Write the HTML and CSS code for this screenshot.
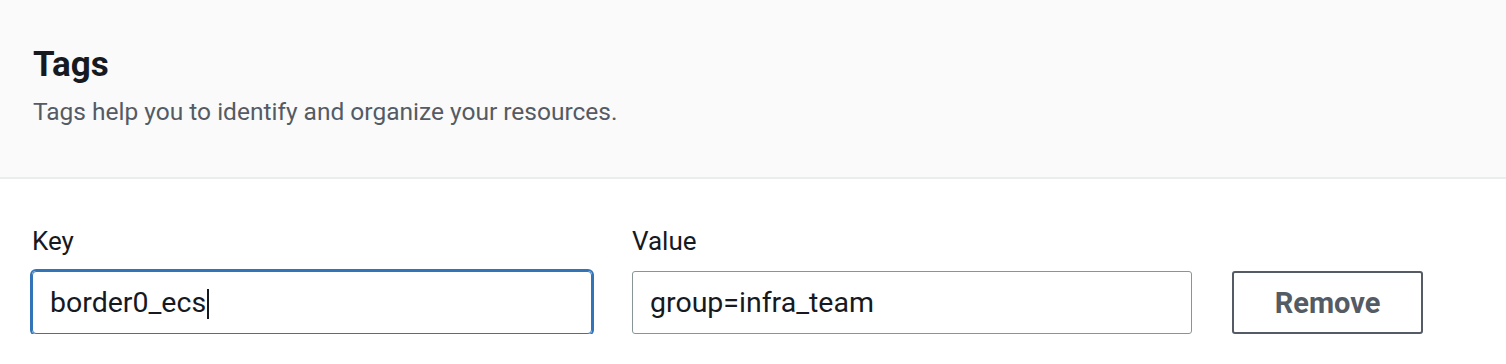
FILE: index.html
```html
<!DOCTYPE html>
<html lang="en">
<head>
    <meta charset="UTF-8">
    <meta name="viewport" content="width=device-width, initial-scale=1.0">
    <title>Tags</title>
    <link rel="stylesheet" href="styles.css">
</head>
<body>
    <div class="panel">
        <div class="panel-header">
            <h2>Tags</h2>
            <p class="description">Tags help you to identify and organize your resources.</p>
        </div>

        <div class="panel-body">
            <div class="tag-row">
                <div class="field">
                    <label>Key</label>
                    <div class="input focused">border0_ecs<span class="caret"></span></div>
                </div>
                <div class="field">
                    <label>Value</label>
                    <div class="input">group=infra_team</div>
                </div>
                <button type="button" class="remove">Remove</button>
            </div>
        </div>
    </div>
</body>
</html>
```

FILE: styles.css
```css
body {
    margin: 0;
    font-family: Roboto, "Noto Sans", Arial, sans-serif;
    background-color: #fff;
    color: #16191f;
}

.panel-header {
    background-color: #fafafa;
    border-bottom: 2px solid #eaeded;
    padding: 44px 33px 0;
    height: 133px;
}

h2 {
    margin: 0;
    font-size: 35px;
    font-weight: 700;
    line-height: 42px;
    color: #16191f;
}

.description {
    margin: 8px 0 0;
    font-size: 24.5px;
    line-height: 36px;
    color: #545b64;
}

.panel-body {
    padding: 44px 32px 0;
}

.tag-row {
    display: flex;
    align-items: flex-end;
    gap: 40px;
}

.field {
    width: 560px;
}

.field label {
    display: block;
    font-size: 26px;
    line-height: 36px;
    margin-bottom: 12px;
    color: #16191f;
}

.input {
    box-sizing: border-box;
    height: 63px;
    padding: 0 17px;
    border: 1.5px solid #879596;
    border-radius: 3px;
    font-size: 28.5px;
    line-height: 61px;
    color: #16191f;
    white-space: nowrap;
}

.input.focused {
    border-color: #3373b8;
    border-radius: 4px;
    box-shadow: 0 0 0 2px #3373b8;
}

.caret {
    display: inline-block;
    width: 2px;
    height: 30px;
    background-color: #16191f;
    vertical-align: middle;
    margin-left: 1px;
}

.remove {
    width: 191px;
    height: 63px;
    background-color: #fff;
    border: 2px solid #545b64;
    border-radius: 3px;
    font-family: inherit;
    font-size: 29px;
    font-weight: 700;
    color: #545b64;
    cursor: pointer;
}
```
